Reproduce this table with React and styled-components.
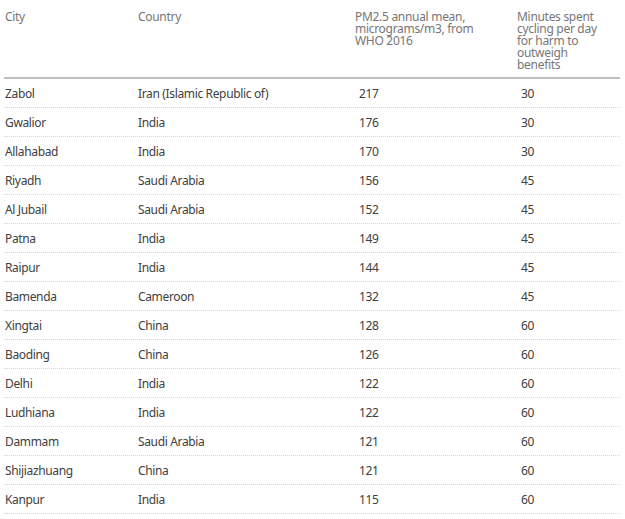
import React from "react";
import styled, { createGlobalStyle } from "styled-components";

const Global = createGlobalStyle`
  html, body { margin: 0; padding: 0; background: #fff; }
  body { font-family: "Noto Sans", "Liberation Sans", sans-serif; }
`;

const cols = "133px 217px 162px 1fr";

const Table = styled.div`
  margin: 0 5px 0 4px;
  width: 616px;
`;

const HeadRow = styled.div`
  display: grid;
  grid-template-columns: ${cols};
  padding: 11px 0 6px;
  border-bottom: 2px solid #bdbdbd;
`;

const HeadCell = styled.div`
  font-size: 12px;
  line-height: 12px;
  letter-spacing: -0.3px;
  color: #767676;
  padding-left: 1px;
  max-width: ${(p) => p.$max || "none"};
`;

const Row = styled.div`
  display: grid;
  grid-template-columns: ${cols};
  height: 28px;
  align-items: center;
  border-bottom: 1px dotted #d6d6d6;
`;

const Cell = styled.div`
  font-size: 12px;
  letter-spacing: -0.35px;
  color: #404040;
  padding-left: ${(p) => (p.$num ? "5px" : "1px")};
  white-space: nowrap;
`;

const data = [
  ["Zabol", "Iran (Islamic Republic of)", "217", "30"],
  ["Gwalior", "India", "176", "30"],
  ["Allahabad", "India", "170", "30"],
  ["Riyadh", "Saudi Arabia", "156", "45"],
  ["Al Jubail", "Saudi Arabia", "152", "45"],
  ["Patna", "India", "149", "45"],
  ["Raipur", "India", "144", "45"],
  ["Bamenda", "Cameroon", "132", "45"],
  ["Xingtai", "China", "128", "60"],
  ["Baoding", "China", "126", "60"],
  ["Delhi", "India", "122", "60"],
  ["Ludhiana", "India", "122", "60"],
  ["Dammam", "Saudi Arabia", "121", "60"],
  ["Shijiazhuang", "China", "121", "60"],
  ["Kanpur", "India", "115", "60"],
];

export default function App() {
  return (
    <>
      <Global />
      <Table>
        <HeadRow>
          <HeadCell>City</HeadCell>
          <HeadCell>Country</HeadCell>
          <HeadCell $max="125px">PM2.5 annual mean, micrograms/m3, from WHO 2016</HeadCell>
          <HeadCell $max="84px">Minutes spent cycling per day for harm to outweigh benefits</HeadCell>
        </HeadRow>
        {data.map((r) => (
          <Row key={r[0]}>
            <Cell>{r[0]}</Cell>
            <Cell>{r[1]}</Cell>
            <Cell $num>{r[2]}</Cell>
            <Cell $num>{r[3]}</Cell>
          </Row>
        ))}
      </Table>
    </>
  );
}
